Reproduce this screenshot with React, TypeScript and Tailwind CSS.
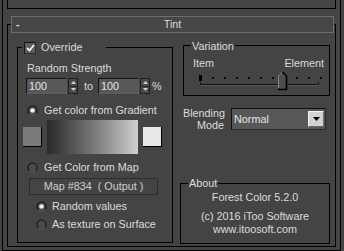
import React from "react";

const Radio = ({ checked }: { checked?: boolean }) => (
  <svg width="11" height="11" viewBox="0 0 11 11" className="shrink-0">
    <circle cx="5.5" cy="5.5" r="4.5" fill="#4a4a4a" stroke="#161616" strokeWidth="1.2" />
    <path d="M2.3 8.7 A4.5 4.5 0 0 0 8.7 8.7" fill="none" stroke="#777" strokeWidth="0.9" />
    {checked && <circle cx="5.5" cy="5.5" r="2.3" fill="#f0f0f0" />}
  </svg>
);

const Spinner = () => (
  <div className="ml-[1px] flex h-[16px] w-[10px] flex-col border border-[#1e1e1e] bg-[#4a4a4a]">
    <div className="flex flex-1 items-center justify-center border-b border-[#2a2a2a]">
      <svg width="5" height="3" viewBox="0 0 5 3">
        <path d="M0 3 L2.5 0 L5 3 Z" fill="#cfcfcf" />
      </svg>
    </div>
    <div className="flex flex-1 items-center justify-center">
      <svg width="5" height="3" viewBox="0 0 5 3">
        <path d="M0 0 L2.5 3 L5 0 Z" fill="#cfcfcf" />
      </svg>
    </div>
  </div>
);

const NumInput = ({ value }: { value: string }) => (
  <div className="flex h-[16px] w-[41px] items-center border-t border-l border-t-[#111] border-l-[#111] border-b border-r border-b-[#5e5e5e] border-r-[#5e5e5e] bg-[#585858] pl-[2px] text-[#e4e4e4]">
    {value}
  </div>
);

const Slider = () => {
  const dots = [16, 28, 40, 52, 64, 76, 100, 112, 124];
  return (
    <svg width="130" height="20" viewBox="0 0 130 20" className="ml-[12px] mt-[1px]">
      <rect x="3" y="4" width="3" height="6" fill="#000" />
      {dots.map((x) => (
        <rect key={x} x={x} y="6" width="2" height="2" fill="#0c0c0c" />
      ))}
      <path d="M4.5 11 V13.5 H122.5 V11" fill="none" stroke="#111" strokeWidth="1" />
      <line x1="5" y1="14.5" x2="123" y2="14.5" stroke="#5a5a5a" strokeWidth="1" />
      <path d="M82.5 17.5 V5 L86.5 1 L90.5 5 V17.5 Z" fill="#4d4d4d" />
      <path d="M82.5 17 V5 L86.5 1" fill="none" stroke="#8a8a8a" strokeWidth="1" />
      <path d="M86.5 1 L90.5 5 V18.5 H82" fill="none" stroke="#000" strokeWidth="1.6" />
    </svg>
  );
};

export default function App() {
  return (
    <div className="h-[251px] w-[344px] overflow-hidden bg-[#444444] font-['Liberation_Sans',Arial,sans-serif] text-[10.8px] leading-[13px] text-[#dcdcdc]">
      <div className="ml-[2px] h-[251px] w-[339px] border-x border-b border-black">
        <div className="ml-[4px] h-[9px] w-[329px] border-x border-b border-black" />
        <div className="ml-[4px] mt-[15px] h-[223px] w-[329px] border border-black">
          {/* rollout title */}
          <div className="-mt-[9px] ml-[3px] grid h-[17px] w-[323px] grid-cols-[1fr_auto_1fr] items-center border border-[#6e6e6e] bg-[#464646]">
            <span className="pl-[4px] font-bold">-</span>
            <span>Tint</span>
            <span />
          </div>

          <div className="flex">
            {/* Override group */}
            <div className="ml-[9px] mt-[14px] h-[196px] w-[156px] border border-black">
              <div className="-mt-[7px] ml-[4px] flex h-[13px] w-[84px] items-center bg-[#444444] px-[2px]">
                <div className="flex h-[12px] w-[12px] items-center justify-center border border-t-[#151515] border-l-[#151515] border-r-[#2a2a2a] border-b-[#2a2a2a] bg-[#5e5e5e]">
                  <svg width="9" height="8" viewBox="0 0 9 8">
                    <path d="M1 4 L3.5 6.5 L8 1" fill="none" stroke="#f4f4f4" strokeWidth="1.8" />
                  </svg>
                </div>
                <span className="ml-[5px]">Override</span>
              </div>

              <div className="ml-[9px] mt-[8px]">Random Strength</div>

              <div className="ml-[8px] mt-[3px] flex items-center">
                <NumInput value="100" />
                <Spinner />
                <span className="ml-[6px] w-[14px]">to</span>
                <NumInput value="100" />
                <Spinner />
                <span className="ml-[2px]">%</span>
              </div>

              <div className="ml-[9px] mt-[10px] flex h-[13px] items-center">
                <Radio checked />
                <span className="ml-[6px]">Get color from Gradient</span>
              </div>

              <div className="ml-[5px] mt-[3px] flex h-[34px] items-center">
                <div className="mt-[-1px] h-[20px] w-[19px] border-r border-b border-black bg-[#7a7a7a]" />
                <div className="ml-[5px] h-[34px] w-[91px] bg-gradient-to-r from-[#2a2a2a] to-[#cfcfcf]" />
                <div className="ml-[5px] mt-[-1px] h-[20px] w-[19px] border-r border-b border-black bg-[#e8e8e8]" />
              </div>

              <div className="ml-[9px] mt-[7px] flex h-[13px] items-center">
                <Radio />
                <span className="ml-[6px]">Get Color from Map</span>
              </div>

              <div className="ml-[11px] mt-[4px] flex h-[17px] w-[129px] items-center justify-center border border-[#2e2e2e] text-[#d0d0d0]">
                Map #834&nbsp;&nbsp;( Output )
              </div>

              <div className="ml-[18px] mt-[5px] flex h-[13px] items-center">
                <Radio checked />
                <span className="ml-[5px]">Random values</span>
              </div>

              <div className="ml-[18px] mt-[5px] flex h-[13px] items-center">
                <Radio />
                <span className="ml-[5px]">As texture on Surface</span>
              </div>
            </div>

            {/* right column */}
            <div className="ml-[10px] flex flex-col">
              <div className="mt-[12px] h-[51px] w-[147px] border border-black">
                <div className="-mt-[6px] ml-[7px] w-fit bg-[#444444] px-[1px]">Variation</div>
                <div className="mt-[4px] flex justify-between pl-[9px] pr-[5px]">
                  <span>Item</span>
                  <span>Element</span>
                </div>
                <Slider />
              </div>

              <div className="mt-[12px] flex">
                <div className="-mt-[1px] w-[41px] text-right leading-[12px]">
                  Blending
                  <br />
                  Mode
                </div>
                <div className="ml-[7px] flex h-[22px] w-[95px] items-center border border-t-[#0e0e0e] border-l-[#0e0e0e] border-r-[#2a2a2a] border-b-[#2a2a2a] bg-[#575757] pl-[2px] pr-[1px]">
                  <span className="flex-1 text-[#e6e6e6]">Normal</span>
                  <div className="flex h-[16px] w-[16px] items-center justify-center border border-t-[#f4f4f4] border-l-[#f4f4f4] border-r-[#6a6a6a] border-b-[#6a6a6a] bg-[#d2d2d2]">
                    <svg width="7" height="4" viewBox="0 0 7 4">
                      <path d="M0 0 H7 L3.5 4 Z" fill="#000" />
                    </svg>
                  </div>
                </div>
              </div>

              <div className="-ml-[3px] mt-[52px] h-[61px] w-[150px] border border-black">
                <div className="-mt-[7px] ml-[7px] w-fit bg-[#444444] px-[1px]">About</div>
                <div className="mt-[1px] text-center">Forest Color 5.2.0</div>
                <div className="mt-[6px] text-center">(c) 2016 iToo Software</div>
                <div className="text-center">www.itoosoft.com</div>
              </div>
            </div>
          </div>
        </div>
      </div>
    </div>
  );
}
